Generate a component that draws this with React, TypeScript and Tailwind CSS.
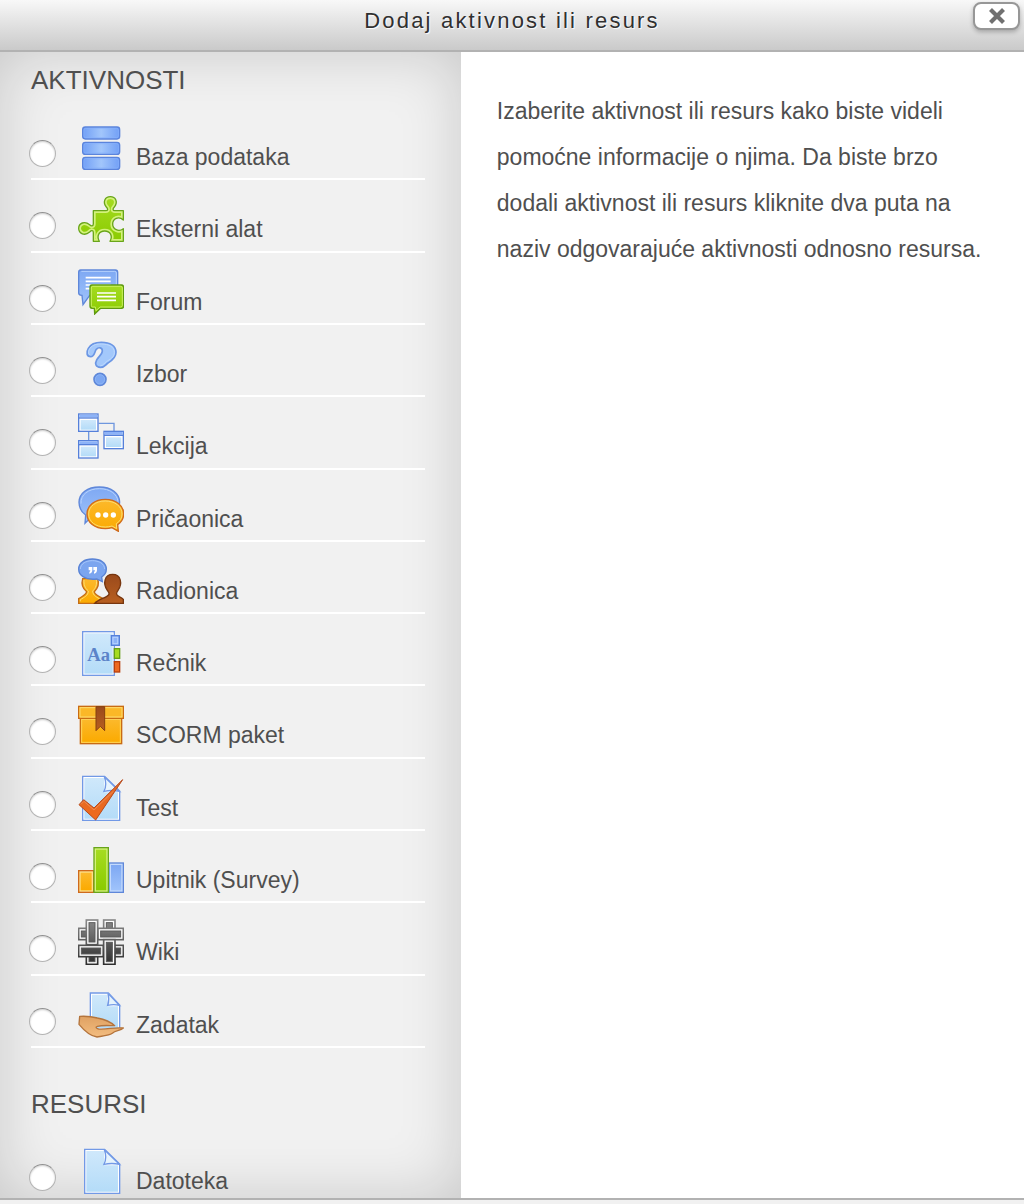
import { useState } from 'react';
import type { ReactNode } from 'react';

interface ModuleItem {
  id: string;
  name: string;
  icon: ReactNode;
}

function Icon({ children }: { children: ReactNode }) {
  return (
    <svg viewBox="0 0 138 138" className="w-[46px] h-[46px] shrink-0" aria-hidden="true">
      {children}
    </svg>
  );
}

// Shared gradients, referenced by every icon on the page
function IconDefs() {
  return (
    <svg className="absolute w-0 h-0" aria-hidden="true">
      <defs>
        <linearGradient id="disk">
          <stop offset="0" stopColor="#719ff6" />
          <stop offset="0.5" stopColor="#a2c6fb" />
          <stop offset="1" stopColor="#719ff6" />
        </linearGradient>
        <linearGradient id="blue" x1="0" y1="0" x2="0" y2="1">
          <stop offset="0" stopColor="#7ea8f3" />
          <stop offset="1" stopColor="#9fc3fb" />
        </linearGradient>
        <linearGradient id="sky" x1="0" y1="0" x2="0" y2="1">
          <stop offset="0" stopColor="#cfe8fb" />
          <stop offset="1" stopColor="#b4dcf8" />
        </linearGradient>
        <linearGradient id="green" x1="0" y1="0" x2="0" y2="1">
          <stop offset="0" stopColor="#a6dc22" />
          <stop offset="1" stopColor="#8acb00" />
        </linearGradient>
        <linearGradient id="orange" x1="0" y1="0" x2="0" y2="1">
          <stop offset="0" stopColor="#fcb92c" />
          <stop offset="1" stopColor="#fbaa00" />
        </linearGradient>
        <linearGradient id="brown" x1="0" y1="0" x2="0" y2="1">
          <stop offset="0" stopColor="#9a4a1c" />
          <stop offset="1" stopColor="#b85f20" />
        </linearGradient>
        <linearGradient id="tick" x1="0" y1="0" x2="0" y2="1">
          <stop offset="0" stopColor="#dd6a2c" />
          <stop offset="1" stopColor="#f06a1c" />
        </linearGradient>
        <linearGradient id="skin" x1="0" y1="0" x2="0" y2="1">
          <stop offset="0" stopColor="#dfa162" />
          <stop offset="1" stopColor="#f3bd80" />
        </linearGradient>
        <linearGradient id="weave" x1="0" y1="0" x2="0" y2="138" gradientUnits="userSpaceOnUse">
          <stop offset="0" stopColor="#8c8c8c" />
          <stop offset="1" stopColor="#2c2c2c" />
        </linearGradient>
      </defs>
    </svg>
  );
}

function DatabaseIcon() {
  return (
    <Icon>
      {[9, 55, 100].map((y) => (
        <rect key={y} x="14" y={y} width="111" height="36" rx="8" fill="url(#disk)" stroke="#5b84dc" strokeWidth="4" />
      ))}
      {[13, 59, 104].map((y) => (
        <rect key={y} x="18" y={y} width="103" height="28" rx="5" fill="none" stroke="#86b0fb" strokeWidth="2" />
      ))}
    </Icon>
  );
}

const puzzlePath =
  'M46 44 H83 C91 44 90 38 85 33 C73 18 81 2 97 2 C113 2 121 18 109 33 C104 38 103 44 111 44 H136 V72 C122 59 104 68 104 84 C104 100 122 109 136 98 V136 H96 C105 120 97 105 80 105 C63 105 55 120 64 136 H46 V110 C46 102 40 103 35 108 C20 121 2 113 2 97 C2 81 20 74 35 86 C40 91 46 91 46 83 Z';

function PuzzleIcon() {
  return (
    <Icon>
      <clipPath id="puzzle-clip">
        <path d={puzzlePath} />
      </clipPath>
      <path d={puzzlePath} fill="url(#green)" stroke="#d4f27c" strokeWidth="14" clipPath="url(#puzzle-clip)" />
      <path d={puzzlePath} fill="none" stroke="#69a51a" strokeWidth="4" strokeLinejoin="round" />
    </Icon>
  );
}

function ForumIcon() {
  return (
    <Icon>
      <path d="M8 3 H112 Q119 3 119 10 V72 Q119 79 112 79 H35 L15 107 L12 79 Q2 79 2 72 V10 Q2 3 8 3 Z" fill="url(#blue)" stroke="#5f87d9" strokeWidth="4" />
      <path d="M10 7 H110 Q115 7 115 12 V74" fill="none" stroke="#b7d2fd" strokeWidth="3" />
      <path d="M23 26 H98 M23 37 H98 M23 48 H98 M23 59 H98" stroke="#fff" strokeWidth="5" />
      <path d="M42 48 H130 Q137 48 137 55 V111 Q137 118 130 118 H68 L50 135 L49 118 H42 Q36 118 36 111 V55 Q36 48 42 48 Z" fill="url(#green)" stroke="#5f9912" strokeWidth="4" />
      <path d="M44 52 H128 Q133 52 133 57 V109 Q133 114 128 114 H66 L54 125 L52 114 H44 Q40 114 40 109 V57 Q40 52 44 52 Z" fill="none" stroke="#c9ef62" strokeWidth="3" />
      <path d="M57 72 H114 M57 83 H114 M57 94 H114" stroke="#fff" strokeWidth="5" />
    </Icon>
  );
}

function ChoiceIcon() {
  return (
    <Icon>
      <path d="M38 47 C26 47 24 34 31 22 C39 8 52 4 70 4 C96 4 114 14 114 34 C114 52 100 60 90 66 C82 71 81 79 67 79 C53 79 50 68 56 57 C61 47 73 40 73 30 C73 20 62 17 55 25 C49 33 50 47 38 47 Z" fill="#a3c8fb" stroke="#6b96e4" strokeWidth="5" />
      <path d="M37 42 C30 40 30 30 36 22 C44 10 58 9 70 9 C93 9 109 18 109 34 C109 50 95 55 85 62 C77 67 77 74 67 74" fill="none" stroke="#bfdafd" strokeWidth="3" />
      <circle cx="66" cy="115" r="18" fill="#7ca7f2" stroke="#5f88d9" strokeWidth="5" />
      <circle cx="66" cy="115" r="14" fill="none" stroke="#93b9f8" strokeWidth="2" />
    </Icon>
  );
}

function LessonIcon() {
  const boxes = [
    [2, 3],
    [78, 55],
    [2, 83],
  ];
  return (
    <Icon>
      <path d="M62 31 H108 V54 M32 57 V83" fill="none" stroke="#6f97de" strokeWidth="4" />
      {boxes.map(([x, y]) => (
        <g key={`${x}-${y}`}>
          <rect x={x} y={y} width="58" height="52" fill="#fff" stroke="#5580da" strokeWidth="4" />
          <rect x={x + 2} y={y + 2} width="54" height="8" fill="#8db3f8" />
          <path d={`M${x} ${y + 12} h58`} stroke="#5580da" strokeWidth="4" />
          <rect x={x + 6} y={y + 18} width="46" height="29" fill="url(#sky)" />
        </g>
      ))}
    </Icon>
  );
}

function ChatIcon() {
  return (
    <Icon>
      <path d="M64 3 C100 3 125 22 125 49 C125 77 98 97 64 97 L36 97 L21 112 L23 87 C10 78 3 65 3 49 C3 22 28 3 64 3 Z" fill="url(#blue)" stroke="#5f87d9" strokeWidth="4" />
      <path d="M9 53 C7 26 32 8 64 8 C96 8 117 24 120 46" fill="none" stroke="#b7d2fd" strokeWidth="3" />
      <path d="M82 40 C114 40 137 58 137 84 C137 98 131 108 119 116 L121 136 L102 125 C96 127 89 128 82 128 C50 128 27 110 27 84 C27 58 50 40 82 40 Z" fill="url(#orange)" stroke="#cf6a1c" strokeWidth="4" />
      <path d="M82 45 C111 45 132 61 132 84 C132 97 126 106 115 113 L116 128 L102 120 C96 122 89 123 82 123 C53 123 32 107 32 84 C32 61 53 45 82 45 Z" fill="none" stroke="#fddc72" strokeWidth="3" />
      <circle cx="60" cy="87" r="8" fill="#fff" />
      <circle cx="83" cy="87" r="8" fill="#fff" />
      <circle cx="106" cy="87" r="8" fill="#fff" />
    </Icon>
  );
}

function WorkshopIcon() {
  return (
    <Icon>
      <path d="M2 136 V122 C14 114 25 110 26 101 C12 90 10 76 14 62 H59 C64 76 60 90 49 101 C49 110 62 114 75 122 V136 Z" fill="url(#orange)" stroke="#c46d17" strokeWidth="4" />
      <path d="M7 130 V125 C18 118 31 113 31 99 C20 90 17 78 18 66 M55 66 C57 78 54 90 44 99 C44 113 58 118 68 125" fill="none" stroke="#fddc72" strokeWidth="3" />
      <path d="M50 136 C62 123 88 119 93 109 C94 104 91 102 88 97 C74 77 79 49 104 49 C129 49 134 77 120 97 C117 102 114 104 116 109 C120 118 130 116 136 124 V136 Z" fill="url(#brown)" stroke="#77360f" strokeWidth="4" />
      <path d="M43 3 C68 3 85 15 85 33 C85 43 79 52 71 57 L73 71 L56 63 C21 67 2 52 2 33 C2 15 19 3 43 3 Z" fill="#7ba5ef" stroke="#5983d5" strokeWidth="4" />
      <path d="M7 33 C8 17 24 8 43 8 C63 8 79 17 80 33" fill="none" stroke="#a6c6fb" strokeWidth="3" />
      <path d="M32 27 h11 v9 q0 9 -9 11 v-5 q3 -1 3 -5 h-5 z M46 27 h11 v9 q0 9 -9 11 v-5 q3 -1 3 -5 h-5 z" fill="#fff" />
    </Icon>
  );
}

function GlossaryIcon() {
  return (
    <Icon>
      <rect x="14" y="5" width="95" height="131" fill="#fff" stroke="#7299e6" strokeWidth="4" />
      <rect x="19" y="10" width="85" height="121" fill="url(#sky)" />
      <rect x="100" y="17" width="24" height="29" fill="#8db3f8" stroke="#5580da" strokeWidth="4" />
      <rect x="105" y="22" width="14" height="19" fill="none" stroke="#b7d2fd" strokeWidth="3" />
      <rect x="109" y="56" width="16" height="29" fill="#a6dc22" stroke="#669f16" strokeWidth="4" />
      <rect x="109" y="95" width="16" height="31" fill="#ee6a22" stroke="#b9410c" strokeWidth="4" />
      <text x="28" y="92" className="font-['Liberation_Serif',serif] font-bold text-[56px]" fill="#5c84c9">
        Aa
      </text>
    </Icon>
  );
}

function PackageIcon() {
  return (
    <Icon>
      <rect x="7" y="48" width="124" height="77" fill="#fcb614" stroke="#c96b12" strokeWidth="4" />
      <rect x="11" y="52" width="116" height="69" fill="url(#orange)" stroke="#fdd45c" strokeWidth="3" />
      <rect x="2" y="13" width="134" height="36" fill="#fbb827" stroke="#c96b12" strokeWidth="4" />
      <rect x="6" y="17" width="126" height="28" fill="none" stroke="#fddc72" strokeWidth="3" />
      <path d="M54 14 H80 V86 L67 73 L54 86 Z" fill="url(#brown)" stroke="#85400f" strokeWidth="3" />
    </Icon>
  );
}

function QuizIcon() {
  return (
    <Icon>
      <path d="M14 4 H80 L125 48 V136 H14 Z" fill="#fff" stroke="#7299e6" strokeWidth="4" />
      <path d="M19 9 H79 V52 H120 V131 H19 Z" fill="url(#sky)" />
      <path d="M79 5 Q88 28 78 49 Q102 44 124 49 Z" fill="#e7f4fd" stroke="#7299e6" strokeWidth="4" />
      <path d="M3 89 L17 74 L48 99 L134 14 L53 135 Z" fill="url(#tick)" stroke="#b8491a" strokeWidth="3" />
      <path d="M9 88 L18 79 L48 105 L106 49" fill="none" stroke="#f28b50" strokeWidth="3" />
    </Icon>
  );
}

function SurveyIcon() {
  return (
    <Icon>
      <rect x="2" y="71" width="45" height="65" fill="#fde08a" stroke="#cf6a1c" strokeWidth="4" />
      <rect x="8" y="77" width="33" height="53" fill="url(#orange)" />
      <rect x="93" y="48" width="43" height="88" fill="#c3dafd" stroke="#5f87d9" strokeWidth="4" />
      <rect x="99" y="54" width="31" height="76" fill="url(#blue)" />
      <rect x="48" y="2" width="43" height="134" fill="#d4f27c" stroke="#69a51a" strokeWidth="4" />
      <rect x="54" y="8" width="31" height="122" fill="url(#green)" />
    </Icon>
  );
}

function WikiIcon() {
  // x, y, width, height; the stubs come first so that the long strands cover them
  const strands = [
    [77, 3, 34, 40],
    [2, 28, 40, 34],
    [25, 96, 34, 40],
    [96, 79, 40, 34],
    [25, 3, 34, 74],
    [60, 28, 76, 34],
    [2, 79, 74, 34],
    [77, 62, 34, 74],
  ];
  return (
    <Icon>
      {strands.map(([x, y, w, h]) => (
        <g key={`${x}-${y}-${w}`}>
          <rect x={x} y={y} width={w} height={h} fill="#fff" stroke="url(#weave)" strokeWidth="5" />
          <rect x={x + 8} y={y + 8} width={w - 16} height={h - 16} fill="url(#weave)" stroke="#5a5a5a" strokeWidth="3" />
        </g>
      ))}
    </Icon>
  );
}

function AssignmentIcon() {
  return (
    <Icon>
      <path d="M37 3 H91 L125 39 V112 H37 Z" fill="#fff" stroke="#7299e6" strokeWidth="4" />
      <path d="M42 8 H88 V43 H120 V108 H42 Z" fill="url(#sky)" />
      <path d="M90 4 Q95 22 89 40 Q108 36 124 40 Z" fill="#e7f4fd" stroke="#7299e6" strokeWidth="4" />
      <path d="M5 73 C22 72 40 73 58 78 C78 82 98 90 110 101 C92 101 74 99 58 103 C52 105 54 110 62 111 C87 113 110 105 136 108 C128 117 112 115 104 123 C96 130 75 132 57 135 C36 132 18 115 3 97 Z" fill="url(#skin)" stroke="#b4743c" strokeWidth="4" strokeLinejoin="round" />
    </Icon>
  );
}

function FileIcon() {
  return (
    <Icon>
      <path d="M20 4 H80 L125 48 V136 H20 Z" fill="#fff" stroke="#7299e6" strokeWidth="4" />
      <path d="M25 9 H79 V52 H120 V131 H25 Z" fill="url(#sky)" />
      <path d="M79 5 Q88 28 78 49 Q102 44 124 49 Z" fill="#e7f4fd" stroke="#7299e6" strokeWidth="4" />
    </Icon>
  );
}

const activities: ModuleItem[] = [
  { id: 'data', name: 'Baza podataka', icon: <DatabaseIcon /> },
  { id: 'lti', name: 'Eksterni alat', icon: <PuzzleIcon /> },
  { id: 'forum', name: 'Forum', icon: <ForumIcon /> },
  { id: 'choice', name: 'Izbor', icon: <ChoiceIcon /> },
  { id: 'lesson', name: 'Lekcija', icon: <LessonIcon /> },
  { id: 'chat', name: 'Pričaonica', icon: <ChatIcon /> },
  { id: 'workshop', name: 'Radionica', icon: <WorkshopIcon /> },
  { id: 'glossary', name: 'Rečnik', icon: <GlossaryIcon /> },
  { id: 'scorm', name: 'SCORM paket', icon: <PackageIcon /> },
  { id: 'quiz', name: 'Test', icon: <QuizIcon /> },
  { id: 'survey', name: 'Upitnik (Survey)', icon: <SurveyIcon /> },
  { id: 'wiki', name: 'Wiki', icon: <WikiIcon /> },
  { id: 'assign', name: 'Zadatak', icon: <AssignmentIcon /> },
];

const resources: ModuleItem[] = [{ id: 'resource', name: 'Datoteka', icon: <FileIcon /> }];

function ModuleOption({
  item,
  selected,
  onSelect,
}: {
  item: ModuleItem;
  selected: boolean;
  onSelect: (id: string) => void;
}) {
  return (
    <label htmlFor={`item-${item.id}`} className="flex items-end pt-4">
      <input
        id={`item-${item.id}`}
        type="radio"
        name="module"
        checked={selected}
        onChange={() => onSelect(item.id)}
        className="appearance-none w-[27px] h-[27px] -ml-0.5 mb-[3px] mr-[22px] shrink-0 rounded-full border border-[#b4b4b4] border-t-[#929292] bg-white shadow-[inset_0_1px_2px_rgba(0,0,0,0.2)] checked:border-[8px] checked:border-[#4a86e8]"
      />
      {item.icon}
      <span className="ml-3 text-[23px] leading-[26px]">{item.name}</span>
    </label>
  );
}

function App() {
  const [selected, setSelected] = useState('');

  return (
    <div className="min-h-screen flex flex-col bg-white text-[#4f4f4f] font-['Liberation_Sans',Arial,sans-serif]">
      <IconDefs />
      <header className="relative h-[52px] shrink-0 border-b-2 border-[#b2b2b2] bg-linear-to-b from-[#f8f8f8] to-[#cacaca]">
        <h1 className="pt-[7px] text-center text-[22px] leading-7 tracking-widest text-[#303030] [text-shadow:1px_1px_1px_#fff]">
          Dodaj aktivnost ili resurs
        </h1>
        <button
          type="button"
          aria-label="Zatvori"
          className="absolute top-0.5 right-1 w-[47px] h-7 flex items-center justify-center rounded-lg border-2 border-[#979797] bg-white shadow-[0_2px_4px_rgba(0,0,0,0.25)]"
        >
          <svg viewBox="0 0 18 18" className="w-[18px] h-[18px]" aria-hidden="true">
            <path d="M2.5 2.5 L15.5 15.5 M15.5 2.5 L2.5 15.5" stroke="#707070" strokeWidth="4.2" />
          </svg>
        </button>
      </header>

      <div className="flex grow">
        <form className="w-[45%] pl-[31px] pr-9 pb-1 bg-[#f1f1f1] shadow-[inset_0_0_60px_rgba(0,0,0,0.17)]">
          <h2 className="pt-3 pb-3 text-[26px] leading-8">AKTIVNOSTI</h2>
          <ul className="grid auto-rows-fr min-h-[940px]">
            {activities.map((item) => (
              <li key={item.id} className="border-b-2 border-white">
                <ModuleOption item={item} selected={selected === item.id} onSelect={setSelected} />
              </li>
            ))}
          </ul>
          <h2 className="pt-10 pb-3 text-[26px] leading-8">RESURSI</h2>
          <ul>
            {resources.map((item) => (
              <li key={item.id}>
                <ModuleOption item={item} selected={selected === item.id} onSelect={setSelected} />
              </li>
            ))}
          </ul>
        </form>
        <main className="flex-1 pt-9 px-9">
          <p className="text-[23px] leading-[46px]">
            Izaberite aktivnost ili resurs kako biste videli pomoćne informacije o njima. Da biste brzo dodali aktivnost
            ili resurs kliknite dva puta na naziv odgovarajuće aktivnosti odnosno resursa.
          </p>
        </main>
      </div>

      <footer className="h-1.5 shrink-0 border-t-2 border-[#b2b2b2] bg-[#f1f1f1]" />
    </div>
  );
}

export default App;
